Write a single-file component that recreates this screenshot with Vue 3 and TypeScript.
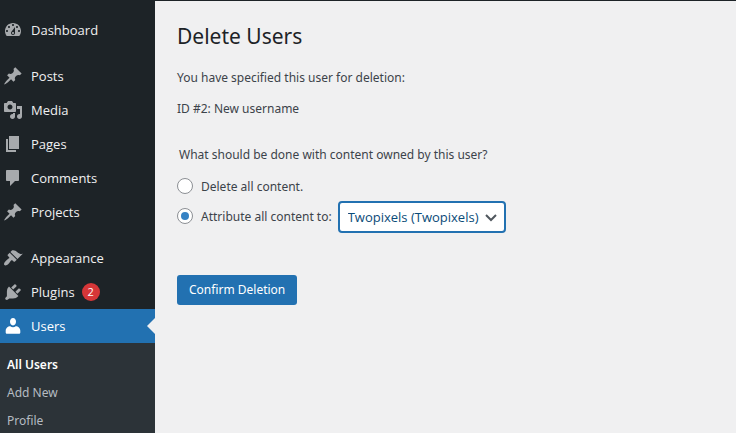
<script setup lang="ts">
import { ref } from 'vue'

interface MenuItem {
  label: string
  icon: string
  count?: number
  current?: boolean
}

const pin =
  'M10.44 3.02l1.82-1.82 6.36 6.35-1.83 1.82c-1.05-.68-2.48-.57-3.41.36l-.75.75c-.92.93-1.04 2.35-.35 3.41l-1.83 1.82-2.41-2.41-2.8 2.79c-.42.42-3.38 2.71-3.8 2.29s1.86-3.39 2.28-3.81l2.79-2.79L4.1 9.36l1.83-1.82c1.05.69 2.48.57 3.4-.36l.75-.75c.93-.92 1.05-2.35.36-3.41z'

const groups: MenuItem[][] = [
  [
    {
      label: 'Dashboard',
      icon: 'M3.76 16h12.48c1.1-1.37 1.76-3.11 1.76-5 0-4.42-3.58-8-8-8s-8 3.58-8 8c0 1.89.66 3.63 1.76 5zM10 4c.55 0 1 .45 1 1s-.45 1-1 1-1-.45-1-1 .45-1 1-1zM6 6c.55 0 1 .45 1 1s-.45 1-1 1-1-.45-1-1 .45-1 1-1zm8 0c.55 0 1 .45 1 1s-.45 1-1 1-1-.45-1-1 .45-1 1-1zm-5.37 5.55L12 7v6c0 1.1-.9 2-2 2s-2-.9-2-2c0-.57.24-1.08.63-1.45zM4 10c.55 0 1 .45 1 1s-.45 1-1 1-1-.45-1-1 .45-1 1-1zm12 0c.55 0 1 .45 1 1s-.45 1-1 1-1-.45-1-1 .45-1 1-1zm-5 3c0-.55-.45-1-1-1s-1 .45-1 1 .45 1 1 1 1-.45 1-1z',
    },
  ],
  [
    { label: 'Posts', icon: pin },
    {
      label: 'Media',
      icon: 'M13 11V4c0-.55-.45-1-1-1h-1.67L9 1H5L3.67 3H2c-.55 0-1 .45-1 1v7c0 .55.45 1 1 1h10c.55 0 1-.45 1-1zM7 4.5c1.38 0 2.5 1.12 2.5 2.5S8.38 9.5 7 9.5 4.5 8.38 4.5 7 5.62 4.5 7 4.5zM14 6h5v10.5c0 1.38-1.12 2.5-2.5 2.5S14 17.88 14 16.5s1.12-2.5 2.5-2.5c.17 0 .34.02.5.05V9h-3V6zm-4 8.05V13h2v3.5c0 1.38-1.12 2.5-2.5 2.5S7 17.88 7 16.5 8.12 14 9.5 14c.17 0 .34.02.5.05z',
    },
    { label: 'Pages', icon: 'M6 15V2h10v13H6zm-1 1h8v2H3V5h2v11z' },
    {
      label: 'Comments',
      icon: 'M4 2h11c.55 0 1 .45 1 1v9c0 .55-.45 1-1 1h-3l-5 5v-5H4c-.55 0-1-.45-1-1V3c0-.55.45-1 1-1z',
    },
    { label: 'Projects', icon: pin },
  ],
  [
    {
      label: 'Appearance',
      icon: 'M14.48 11.06L7.41 3.99l1.5-1.5c.5-.56 2.3-.47 3.51.32 1.21.8 1.43 1.28 2.91 2.1 1.18.64 2.45 1.26 4.45.85zm-.71.71L6.7 4.7 4.93 6.47c-.39.39-.39 1.02 0 1.41l1.06 1.06c.39.39.39 1.03 0 1.42-.6.6-1.43 1.11-2.21 1.69-.35.26-.7.53-1.01.84C1.43 14.23.4 16.08 1.4 17.07c.99 1 2.84-.03 4.18-1.36.31-.31.58-.66.85-1.02.57-.78 1.08-1.61 1.69-2.21.39-.39 1.02-.39 1.41 0l1.06 1.06c.39.39 1.02.39 1.41 0z',
    },
    {
      label: 'Plugins',
      count: 2,
      icon: 'M13.4 4.4L10.2 7.6 8.2 5.6l3.2-3.2c.4-.4 1.1-.2 1.6.3.6.5.7 1.3.4 1.7zM4.8 6L6 4.6l9.4 9.4-1.4 1.2c-.9.8-2.6 1.2-3.9 1.2H6.3L4.9 17.6c-.6.6-1.6.6-2.2 0-.6-.6-.6-1.6 0-2.2l1.2-1.2v-4.3c0-1.2.3-3.2.9-3.9zm7.6 3.8l3.2-3.2c.4-.4 1.1-.2 1.7.3.5.5.6 1.3.3 1.7l-3.2 3.2z',
    },
    {
      label: 'Users',
      current: true,
      icon: 'M10 9.4c-2 0-3-1.9-3-3.7S8 2 10 2s3 1.9 3 3.7-1 3.7-3 3.7zM7.3 10.3c1.5 1.3 3.9 1.3 5.4 0 2.5 0 4.6 2 4.6 4.5v1.7c0 .8-.6 1.3-1.4 1.3H4.1c-.8 0-1.4-.5-1.4-1.3v-1.7c0-2.5 2.1-4.5 4.6-4.5z',
    },
  ],
]

const submenu: string[] = ['All Users', 'Add New', 'Profile']

const action = ref<'delete' | 'reassign'>('reassign')
const owner = ref<string>('Twopixels')
</script>

<template>
  <div class="admin">
    <nav class="sidebar">
      <ul v-for="(group, g) in groups" :key="g" class="group">
        <li v-for="item in group" :key="item.label">
          <a href="#" class="item" :class="{ current: item.current }">
            <svg class="icon" viewBox="0 0 20 20" aria-hidden="true">
              <path :d="item.icon" fill-rule="evenodd" />
            </svg>
            <span>{{ item.label }}</span>
            <span v-if="item.count" class="count">{{ item.count }}</span>
          </a>
        </li>
      </ul>
      <ul class="submenu">
        <li v-for="(name, i) in submenu" :key="name">
          <a href="#" class="subitem" :class="{ active: i === 0 }">{{ name }}</a>
        </li>
      </ul>
    </nav>

    <main class="content">
      <h1>Delete Users</h1>
      <p>You have specified this user for deletion:</p>
      <p>ID #2: New username</p>
      <form @submit.prevent>
        <fieldset>
          <legend>What should be done with content owned by this user?</legend>
          <div class="option">
            <input id="opt-delete" v-model="action" type="radio" name="action" value="delete" />
            <label for="opt-delete">Delete all content.</label>
          </div>
          <div class="option reassign">
            <input id="opt-reassign" v-model="action" type="radio" name="action" value="reassign" />
            <label id="reassign-label" for="opt-reassign">Attribute all content to:</label>
            <div class="picker">
              <select v-model="owner" aria-labelledby="reassign-label">
                <option value="Twopixels">Twopixels (Twopixels)</option>
              </select>
              <svg class="chevron" viewBox="0 0 12 8" aria-hidden="true">
                <path d="M1 1l5 5 5-5" />
              </svg>
            </div>
          </div>
        </fieldset>
        <button type="submit">Confirm Deletion</button>
      </form>
    </main>
  </div>
</template>

<style>
body {
  background: #f0f0f1;
}
</style>

<style scoped>
.admin {
  display: flex;
  box-sizing: border-box;
  min-height: 100vh;
  border-top: 1px solid #1d2327;
  font-family: 'Noto Sans', 'Open Sans', sans-serif;
  font-size: 12px;
  line-height: 18px;
  color: #3c434a;
}

.sidebar {
  display: flex;
  flex-direction: column;
  flex: 0 0 155px;
  box-sizing: border-box;
  height: calc(100vh - 1px);
  padding-top: 12px;
  overflow: hidden;
  background: #1d2327;
}

ul {
  flex: none;
  margin: 0;
  padding: 0;
  list-style: none;
}

.group + .group {
  margin-top: 12px;
}

.item {
  position: relative;
  display: flex;
  align-items: center;
  height: 34px;
  padding-left: 3px;
  font-family: 'Open Sans', 'Noto Sans', sans-serif;
  font-size: 13px;
  color: #f0f0f1;
  text-decoration: none;
}

.icon {
  width: 20px;
  height: 20px;
  margin-right: 8px;
  fill: #a7aaad;
}

.current {
  background: #2271b1;
  color: #fff;
}

.current .icon {
  fill: #fff;
}

.current::after {
  content: '';
  position: absolute;
  top: 9px;
  right: 0;
  border: 8px solid transparent;
  border-left-width: 0;
  border-right-color: #f0f0f1;
}

.count {
  min-width: 18px;
  margin-left: 7px;
  border-radius: 9px;
  background: #d63638;
  color: #fff;
  font-size: 11px;
  text-align: center;
}

.submenu {
  flex: 1 0 auto;
  padding-top: 8px;
  background: #2c3338;
}

.subitem {
  display: block;
  padding: 5px 7px;
  color: #b5bcc2;
  text-decoration: none;
}

.active {
  color: #fff;
  font-weight: 600;
}

.content {
  flex: 1;
  padding: 20px 22px;
}

h1 {
  margin: 0 0 18px;
  font-size: 21px;
  font-weight: 400;
  line-height: 30px;
  color: #1d2327;
}

p {
  margin: 0 0 13px;
}

fieldset {
  margin: 28px 0 0;
  padding: 0;
  border: 0;
}

legend {
  margin-bottom: 14px;
  padding: 0 2px;
}

.option {
  display: flex;
  align-items: center;
}

.reassign {
  margin-top: 5px;
}

input[type='radio'] {
  appearance: none;
  display: grid;
  place-content: center;
  box-sizing: border-box;
  width: 16px;
  height: 16px;
  margin: 0 8px 2px 0;
  border: 1px solid #8c8f94;
  border-radius: 50%;
  background: #fff;
}

input[type='radio']:checked::before {
  content: '';
  width: 8px;
  height: 8px;
  border-radius: 50%;
  background: #3582c4;
}

.picker {
  position: relative;
  margin-left: 6px;
}

select {
  appearance: none;
  box-sizing: border-box;
  width: 168px;
  height: 32px;
  padding: 0 24px 0 8px;
  border: 2px solid #2271b1;
  border-radius: 4px;
  outline: none;
  background: #fff;
  color: #0a4b78;
  font: inherit;
  font-family: 'Open Sans', 'Noto Sans', sans-serif;
  font-size: 13px;
}

.chevron {
  position: absolute;
  top: 13px;
  right: 9px;
  width: 12px;
  height: 8px;
  fill: none;
  stroke: #50575e;
  stroke-width: 2;
  pointer-events: none;
}

button {
  height: 30px;
  margin-top: 42px;
  padding: 0 12px;
  border: 0;
  border-radius: 3px;
  background: #2271b1;
  color: #fff;
  font: inherit;
}
</style>
